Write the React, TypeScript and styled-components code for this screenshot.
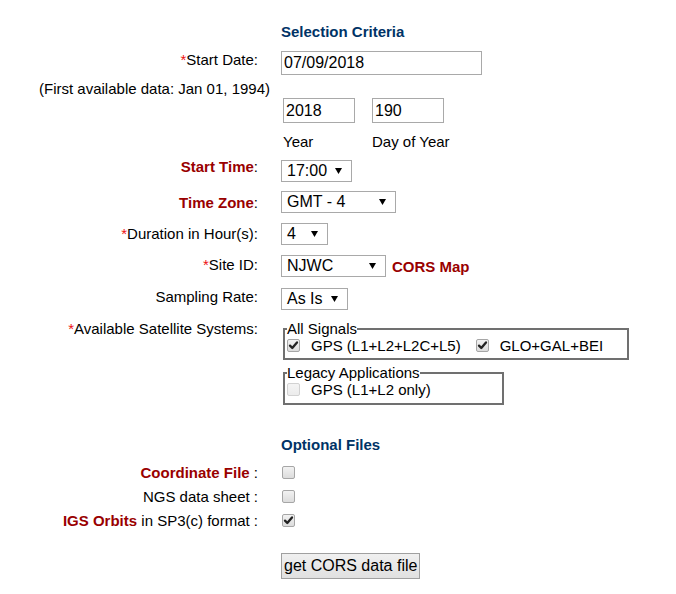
import styled, { createGlobalStyle } from "styled-components";

const GlobalStyle = createGlobalStyle`
  body {
    margin: 0;
    background: #fff;
    color: #000;
    font-family: "Liberation Sans", Arial, sans-serif;
    font-size: 15px;
  }
`;

const DARK_RED = "#990000";
const NAVY = "#003366";

export default function App() {
  return (
    <>
      <GlobalStyle />
      <Form>
        <Row>
          <Label />
          <Heading>Selection Criteria</Heading>
        </Row>

        <Row $mt={11}>
          <Label>
            <Req>*</Req>Start Date:
          </Label>
          <TextBox $w={201} $h={24}>07/09/2018</TextBox>
        </Row>

        <Row $mt={5}>
          <Label $flush>(First available data: Jan 01, 1994)</Label>
        </Row>

        <Row $mt={1}>
          <Label />
          <Pair>
            <TextBox $w={72} $h={25}>2018</TextBox>
            <TextBox $w={72} $h={25}>190</TextBox>
          </Pair>
        </Row>

        <Row $mt={10}>
          <Label />
          <Pair>
            <Caption>Year</Caption>
            <Caption>Day of Year</Caption>
          </Pair>
        </Row>

        <Row $mt={10}>
          <Label $shift={-2}>
            <Strong>Start Time</Strong>:
          </Label>
          <Dropdown $w={71}>17:00</Dropdown>
        </Row>

        <Row $mt={9}>
          <Label $shift={3}>
            <Strong>Time Zone</Strong>:
          </Label>
          <Dropdown $w={115}>GMT - 4</Dropdown>
        </Row>

        <Row $mt={10}>
          <Label $shift={2}>
            <Req>*</Req>Duration in Hour(s):
          </Label>
          <Dropdown $w={47}>4</Dropdown>
        </Row>

        <Row $mt={10}>
          <Label $shift={1}>
            <Req>*</Req>Site ID:
          </Label>
          <Inline>
            <Dropdown $w={105}>NJWC</Dropdown>
            <MapLink>CORS Map</MapLink>
          </Inline>
        </Row>

        <Row $mt={11}>
          <Label>Sampling Rate:</Label>
          <Dropdown $w={67}>As Is</Dropdown>
        </Row>

        <Row $mt={10}>
          <Label>
            <Req>*</Req>Available Satellite Systems:
          </Label>
          <Groups>
            <Group $w={346}>
              <legend>All Signals</legend>
              <Options>
                <Option>
                  <Check $checked />
                  GPS (L1+L2+L2C+L5)
                </Option>
                <Option>
                  <Check $checked />
                  GLO+GAL+BEI
                </Option>
              </Options>
            </Group>
            <Group $w={221} $mt={4} $pb={5}>
              <legend>Legacy Applications</legend>
              <Options>
                <Option>
                  <Check $disabled />
                  GPS (L1+L2 only)
                </Option>
              </Options>
            </Group>
          </Groups>
        </Row>

        <Row $mt={31}>
          <Label />
          <Heading>Optional Files</Heading>
        </Row>

        <Row $mt={11}>
          <Label>
            <Strong>Coordinate File</Strong> :
          </Label>
          <CheckCell>
            <Check />
          </CheckCell>
        </Row>

        <Row $mt={7}>
          <Label>NGS data sheet :</Label>
          <CheckCell>
            <Check />
          </CheckCell>
        </Row>

        <Row $mt={7}>
          <Label>
            <Strong>IGS Orbits</Strong> in SP3(c) format :
          </Label>
          <CheckCell>
            <Check $checked />
          </CheckCell>
        </Row>

        <Row $mt={24}>
          <Label />
          <div>
            <SubmitButton type="button">get CORS data file</SubmitButton>
          </div>
        </Row>
      </Form>
    </>
  );
}

const Dropdown: React.FC<{ $w: number; children: React.ReactNode }> = ({
  $w,
  children
}) => (
  <SelectBox $w={$w}>
    <span>{children}</span>
    <Arrow width="7" height="6" viewBox="0 0 7 6">
      <polygon points="0,0 7,0 3.5,6" fill="#000" />
    </Arrow>
  </SelectBox>
);

const Check: React.FC<{ $checked?: boolean; $disabled?: boolean }> = ({
  $checked,
  $disabled
}) => (
  <Box $disabled={$disabled}>
    {$checked && (
      <svg width="11" height="11" viewBox="0 0 11 11">
        <path
          d="M2 5.6 L4.3 8 L9 2.4"
          fill="none"
          stroke="#222"
          strokeWidth="2.3"
          strokeLinecap="round"
          strokeLinejoin="round"
        />
      </svg>
    )}
  </Box>
);

const Form = styled.div`
  display: flex;
  flex-direction: column;
  padding-top: 23px;
  width: 676px;
`;

const Row = styled.div<{ $mt?: number }>`
  display: grid;
  grid-template-columns: 270px auto;
  column-gap: 11px;
  align-items: start;
  margin-top: ${({ $mt }) => $mt ?? 0}px;
`;

const Label = styled.div<{ $shift?: number; $flush?: boolean }>`
  margin-top: ${({ $shift }) => $shift ?? 0}px;
  text-align: right;
  white-space: nowrap;
  line-height: 17px;
  padding-right: ${({ $flush }) => ($flush ? 0 : 12)}px;
`;

const Req = styled.span`
  color: #ee1111;
`;

const Strong = styled.span`
  color: ${DARK_RED};
  font-weight: bold;
`;

const Heading = styled.div`
  color: ${NAVY};
  font-weight: bold;
  line-height: 17px;
`;

const TextBox = styled.div<{ $w: number; $h: number }>`
  box-sizing: border-box;
  width: ${({ $w }) => $w}px;
  height: ${({ $h }) => $h}px;
  border: 1px solid #a9a9a9;
  padding: 0 2px;
  font-size: 16px;
  line-height: ${({ $h }) => $h - 2}px;
  background: #fff;
`;

const Pair = styled.div`
  display: grid;
  grid-template-columns: 89px 89px;
  margin-left: 2px;
`;

const Caption = styled.div`
  line-height: 17px;
`;

const SelectBox = styled.div<{ $w: number }>`
  box-sizing: border-box;
  display: flex;
  align-items: center;
  width: ${({ $w }) => $w}px;
  height: 22px;
  border: 1px solid #a9a9a9;
  padding: 0 9px 0 5px;
  font-size: 16px;
  line-height: 20px;
  background: #fff;
`;

const Arrow = styled.svg`
  margin-left: auto;
  flex-shrink: 0;
`;

const Inline = styled.div`
  display: flex;
  align-items: center;
  gap: 6px;
`;

const MapLink = styled.span`
  color: ${DARK_RED};
  font-weight: bold;
  line-height: 17px;
`;

const Groups = styled.div`
  display: flex;
  flex-direction: column;
  align-items: flex-start;
  margin-left: 2px;
`;

const Group = styled.fieldset<{ $w: number; $mt?: number; $pb?: number }>`
  box-sizing: border-box;
  width: ${({ $w }) => $w}px;
  margin: ${({ $mt }) => $mt ?? 0}px 0 0 0;
  padding: 0 2px ${({ $pb }) => $pb ?? 4}px 2px;
  border: 2px solid #707070;
  min-inline-size: 0;

  legend {
    padding: 0;
    line-height: 17px;
    font-size: 15px;
  }
`;

const Options = styled.div`
  display: flex;
  align-items: center;
  gap: 15px;
  line-height: 17px;
`;

const Option = styled.label`
  display: inline-flex;
  align-items: center;
  gap: 11px;
`;

const Box = styled.span<{ $disabled?: boolean }>`
  box-sizing: border-box;
  display: inline-flex;
  align-items: center;
  justify-content: center;
  width: 13px;
  height: 13px;
  border: 1px solid ${({ $disabled }) => ($disabled ? "#d2d2d2" : "#a6a6a6")};
  border-radius: 2px;
  background: ${({ $disabled }) =>
    $disabled
      ? "linear-gradient(#f4f4f4, #ececec)"
      : "linear-gradient(#f2f2f2, #dcdcdc)"};
`;

const CheckCell = styled.div`
  display: flex;
  align-items: center;
  height: 17px;
  padding-left: 1px;
`;

const SubmitButton = styled.button`
  box-sizing: border-box;
  height: 26px;
  padding: 0 2px;
  border: 1px solid #a0a0a0;
  background: linear-gradient(#f0f0f0, #e0e0e0);
  color: #000;
  font-family: "Liberation Sans", Arial, sans-serif;
  font-size: 16px;
  line-height: 22px;
  cursor: pointer;
`;
